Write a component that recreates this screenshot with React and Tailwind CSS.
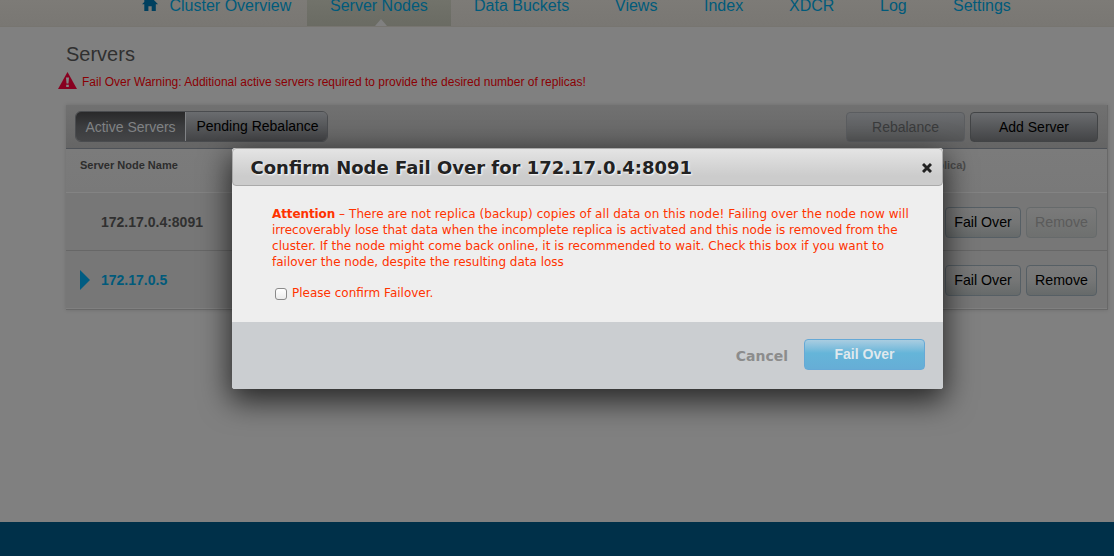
import React from 'react';

const tabs = [
  { label: 'Data Buckets', cls: 'w-[141px]' },
  { label: 'Views', cls: 'w-[89px]' },
  { label: 'Index', cls: 'w-[85px]' },
  { label: 'XDCR', cls: 'w-[91px]' },
  { label: 'Log', cls: 'w-[73px]' },
  { label: 'Settings', cls: 'w-[110px]' },
];

function HomeIcon() {
  return (
    <svg className="mr-[11.5px] h-[16px] w-[16px] shrink-0" viewBox="0 0 16 16" fill="#00405f">
      <path d="M8 -1 16 7.2H13.8V14H9.7V9.2H6.4V14H2.3V7.2H0L2.3 4.9V1H4.6V2.5Z" />
    </svg>
  );
}

function Nav() {
  return (
    <nav className="flex h-[27px] items-end overflow-hidden border-b border-[#777570] bg-linear-to-b from-[#7d7b77] to-[#797773] text-[16px] leading-[18px] text-[#005a7b]">
      <div className="ml-[142px] flex w-[165px] shrink-0 pb-[11px]">
        <HomeIcon />
        <span className="whitespace-nowrap">Cluster Overview</span>
      </div>
      <div className="relative h-[27px] w-[144px] shrink-0 bg-linear-to-b from-[#72736b] to-[#6a6b63] pl-[23px]">
        <span className="relative -top-[2px] whitespace-nowrap">Server Nodes</span>
        <svg className="absolute bottom-0 left-[68px] h-[7px] w-[12px]" viewBox="0 0 12 7" fill="#808080">
          <path d="M6 0 12 7H0Z" />
        </svg>
      </div>
      {tabs.map((t) => (
        <div key={t.label} className={`${t.cls} shrink-0 whitespace-nowrap pb-[11px] pl-[23px]`}>
          {t.label}
        </div>
      ))}
    </nav>
  );
}

function RowButton({ label, width, disabled }) {
  return (
    <button
      className={`${width} h-[31px] rounded-[4px] border pb-px text-[14.2px] leading-[18px] whitespace-nowrap bg-linear-to-b ${
        disabled
          ? 'border-[#666a6b] from-[#7a7a7a] to-[#6e706f] text-[#5b5b5b]'
          : 'border-[#565f65] from-[#7a7a7a] via-[#757676] via-50% to-[#666a6a] text-black'
      }`}
    >
      {label}
    </button>
  );
}

function ServerRow({ name, expandable, removable, cls }) {
  return (
    <div className={`flex h-[58px] items-center border-t bg-[#777777] pt-px pr-[10px] ${cls}`}>
      <div className="flex w-[35px] pl-[14px]">
        {expandable && (
          <svg className="h-[20px] w-[10px]" viewBox="0 0 10 20" fill="#005c82">
            <path d="M0 0 10 10 0 20Z" />
          </svg>
        )}
      </div>
      <span className={`pt-px text-[14px] font-bold ${expandable ? 'text-[#005a7b]' : 'text-[#303030]'}`}>{name}</span>
      <div className="ml-auto flex gap-[5px]">
        <RowButton label="Fail Over" width="w-[76px]" />
        <RowButton label="Remove" width="w-[71px]" disabled={!removable} />
      </div>
    </div>
  );
}

function ServersPanel() {
  return (
    <section className="mt-[13px] ml-[66px] h-[205px] w-[1042px] border-r border-b border-[#686868] shadow-[0_0_4px_rgba(0,0,0,0.15)]">
      <div className="flex h-[44px] items-center border-b border-[#4e5258] bg-linear-to-b from-[#717171] to-[#656565] pr-[9px] pl-[9px]">
        <div className="flex h-[31px] overflow-hidden rounded-[6px] border border-[#4a4c4f] text-[14px]">
          <button className="w-[110px] border-r border-[#808285] bg-linear-to-b from-[#29292a] via-[#3b3c3e] via-50% to-[#444547] pt-px whitespace-nowrap text-[#808284]">
            Active Servers
          </button>
          <button className="w-[141px] bg-linear-to-b from-[#6a6c6f] to-[#434446] pl-[2px] whitespace-nowrap text-black">
            Pending Rebalance
          </button>
        </div>
        <div className="ml-auto flex gap-[5px] pt-px text-[14px]">
          <button className="h-[30px] w-[119px] rounded-[4px] border border-[#5b5d60] bg-linear-to-b from-[#6b6d70] to-[#555657] pt-px text-[#3a3b3c]">
            Rebalance
          </button>
          <button className="h-[30px] w-[128px] rounded-[4px] border border-[#424446] bg-linear-to-b from-[#6a6c6f] to-[#434446] pt-px text-black">
            Add Server
          </button>
        </div>
      </div>
      <div className="flex h-[43px] justify-between bg-linear-to-b from-[#7b7b7b] to-[#797979] pt-[10px] pr-[141px] pl-[14px] text-[11px] leading-[13px] font-bold text-[#2d2d2d]">
        <span>Server Node Name</span>
        <span className="text-[#4c4c4c]">(Active/Replica)</span>
      </div>
      <ServerRow name="172.17.0.4:8091" cls="border-[#838383]" />
      <ServerRow name="172.17.0.5" expandable removable cls="border-[#676767]" />
    </section>
  );
}

function FailoverDialog() {
  return (
    <div
      role="dialog"
      className="absolute top-[148px] left-[232px] h-[241px] w-[711px] rounded-[3px] bg-[#eeeeee] font-['DejaVu_Sans',sans-serif] shadow-[0_10px_30px_2px_rgba(0,0,0,0.7)]"
    >
      <header className="flex h-[38px] items-center justify-between rounded-[4px] border border-[#aaaaaa] bg-linear-to-b from-[#e4e4e4] to-[#cccccc] to-75% pr-[10px] pl-[17.5px]">
        <h2 className="pt-px text-[18px] font-bold whitespace-nowrap text-[#222222] [text-shadow:1px_1px_2px_#fff]">
          Confirm Node Fail Over for 172.17.0.4:8091
        </h2>
        <svg className="mt-px h-[10px] w-[10px]" viewBox="0 0 10 10" stroke="#222" strokeWidth="2.9">
          <path d="M1 1 9 9M9 1 1 9" />
        </svg>
      </header>
      <div className="h-[136px] pt-[20px] pl-[40px] text-[12px] leading-[16px] text-[#ff3300]">
        <p className="whitespace-nowrap">
          <b className="tracking-[-0.1px]">Attention</b>
          <span className="tracking-[0.068px]">
            {' '}
            – There are not replica (backup) copies of all data on this node! Failing over the node now will
          </span>
          <br />
          irrecoverably lose that data when the incomplete replica is activated and this node is removed from the
          <br />
          <span className="tracking-[0.045px]">
            cluster. If the node might come back online, it is recommended to wait. Check this box if you want to
          </span>
          <br />
          failover the node, despite the resulting data loss
        </p>
        <label className="mt-[15px] flex pl-[3px]">
          <input
            type="checkbox"
            className="mt-[3px] mr-[5px] h-[12px] w-[12px] appearance-none rounded-[3px] border border-[#8a8a8a] bg-linear-to-b from-white to-[#ececec]"
          />
          <span>Please confirm Failover.</span>
        </label>
      </div>
      <footer className="flex h-[67px] items-start justify-end rounded-b-[3px] bg-[#cbced1] pt-[17px] pr-[18px]">
        <button className="mr-[16px] h-[34px] text-[14px] font-bold text-[#8c8c8c]">Cancel</button>
        <button className="h-[31px] w-[121px] rounded-[4px] border border-[#66a9d6] bg-linear-to-b from-[#a9cde1] via-[#65b5d9] via-45% to-[#66add6] pb-px font-['Liberation_Sans',Arial,sans-serif] text-[14px] font-bold text-[#dfe8ed]">
          Fail Over
        </button>
      </footer>
    </div>
  );
}

export default function App() {
  return (
    <div className="relative flex h-[556px] w-[1114px] flex-col overflow-hidden bg-[#808080] font-['Liberation_Sans',Arial,sans-serif]">
      <Nav />
      <h1 className="mt-[16px] ml-[66px] text-[20px] leading-[23px] text-[#303030]">Servers</h1>
      <div className="mt-[5px] ml-[58px] flex h-[21px] text-[12px] text-[#8b0004]">
        <svg className="mt-px mr-[5px] h-[17px] w-[19px]" viewBox="0 0 19 17">
          <path d="M9.5 0 19 17H0Z" fill="#880020" />
          <path d="M8 5.5H11L10.5 11.5H8.5ZM8.2 12.7H10.8V15H8.2Z" fill="#858585" />
        </svg>
        <span className="pt-[4px] leading-[15px] whitespace-nowrap">
          Fail Over Warning: Additional active servers required to provide the desired number of replicas!
        </span>
      </div>
      <ServersPanel />
      <div className="mt-auto h-[34px] bg-[#003049]" />
      <FailoverDialog />
    </div>
  );
}
